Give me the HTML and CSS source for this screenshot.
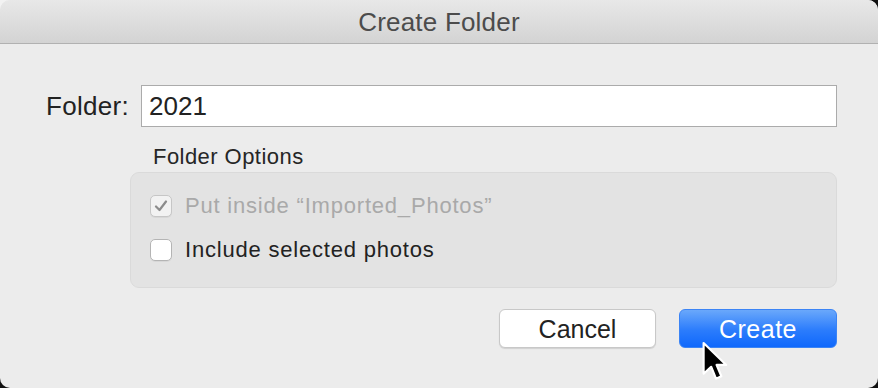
FILE: index.html
```html
<!DOCTYPE html>
<html>
<head>
<meta charset="utf-8">
<link rel="stylesheet" href="styles.css">
</head>
<body>
<div class="window">
  <div class="titlebar">Create Folder</div>
  <div class="content">
    <div class="form-row">
      <label class="label">Folder:</label>
      <div class="field">2021</div>
    </div>
    <div class="options">
      <div class="options-title">Folder Options</div>
      <div class="group">
        <div class="check-row disabled">
          <span class="box checked">
            <svg width="14" height="12" viewBox="0 0 14 12"><path d="M2 6.5 L5.5 10 L12 1.5" fill="none" stroke="#8c8c8c" stroke-width="2.2" stroke-linecap="round" stroke-linejoin="round"/></svg>
          </span>
          <span class="check-label">Put inside “Imported_Photos”</span>
        </div>
        <div class="check-row">
          <span class="box"></span>
          <span class="check-label">Include selected photos</span>
        </div>
      </div>
    </div>
    <div class="buttons">
      <button class="btn cancel">Cancel</button>
      <button class="btn primary">Create</button>
    </div>
  </div>
  <svg class="cursor" width="28" height="44" viewBox="0 0 26 40">
    <path d="M1.5 1.5 L1.5 30 L8.5 23.5 L13 34.5 L18 32.3 L13.5 21.8 L22.5 21.8 Z" fill="#000" stroke="#fff" stroke-width="2" stroke-linejoin="round"/>
  </svg>
</div>
</body>
</html>
```

FILE: styles.css
```css
html, body {
  margin: 0;
  padding: 0;
}
body {
  width: 878px;
  height: 388px;
  background: linear-gradient(135deg, #f2f2f2 0 14px, #111 14px);
  font-family: "Liberation Sans", Arial, sans-serif;
  overflow: hidden;
}
.window {
  position: relative;
  width: 878px;
  height: 388px;
  background: #ececec;
  border-radius: 10px;
  overflow: hidden;
}
.titlebar {
  border-bottom: 1px solid #b1b1b1;
  background: linear-gradient(#e8e8e8, #d3d3d3);
  color: #4c4c4c;
  font-size: 26px;
  letter-spacing: 0.2px;
  display: flex;
  align-items: center;
  justify-content: center;
  padding-top: 1px;
  box-sizing: border-box;
  height: 44px;
}
.content {
  padding: 41px 41px 0 46px;
}
.form-row {
  display: flex;
  align-items: center;
  gap: 13px;
  height: 42px;
}
.label {
  font-size: 26px;
  color: #222;
  width: 82px;
  letter-spacing: 0.3px;
}
.field {
  flex: 1;
  height: 42px;
  box-sizing: border-box;
  background: #fff;
  border: 1px solid #ababab;
  font-size: 26px;
  color: #222;
  padding-left: 7px;
  display: flex;
  align-items: center;
  padding-top: 1px;
}
.options {
  margin-left: 84px;
  margin-top: 17px;
}
.options-title {
  font-size: 22px;
  line-height: 26px;
  color: #262626;
  padding-left: 23px;
  letter-spacing: 0.45px;
}
.group {
  margin-top: 2px;
  height: 116px;
  box-sizing: border-box;
  background: #e3e3e3;
  border: 1px solid #dadada;
  border-radius: 9px;
  padding: 22px 0 0 19px;
  display: flex;
  flex-direction: column;
  gap: 22px;
}
.check-row {
  display: flex;
  align-items: center;
  gap: 13px;
  height: 22px;
}
.box {
  width: 22px;
  height: 22px;
  box-sizing: border-box;
  background: #fff;
  border: 1px solid #b4b4b4;
  border-radius: 5px;
  display: flex;
  align-items: center;
  justify-content: center;
  box-shadow: 0 1px 0 rgba(0,0,0,0.05);
}
.box.checked {
  background: #f2f2f2;
  border-color: #c6c6c6;
}
.check-label {
  font-size: 22px;
  color: #222;
  letter-spacing: 0.8px;
}
.disabled .check-label {
  color: #a9a9a9;
}
.buttons {
  display: flex;
  justify-content: flex-end;
  gap: 23px;
  margin-top: 21px;
}
.btn {
  width: 157px;
  height: 39px;
  border-radius: 6px;
  font-family: "Liberation Sans", Arial, sans-serif;
  font-size: 25px;
  padding: 0;
  padding-top: 1px;
}
.cancel {
  background: #fff;
  color: #222;
  border: 1px solid #c8c8c8;
  box-shadow: 0 1px 1px rgba(0,0,0,0.12);
}
.primary {
  width: 158px;
  background: linear-gradient(#6aa8fb, #2b7cfc 55%, #0f68fc);
  color: #fff;
  border: 1px solid #3b84f5;
  letter-spacing: 0.5px;
}
.cursor {
  position: absolute;
  left: 702px;
  top: 341px;
}
```
